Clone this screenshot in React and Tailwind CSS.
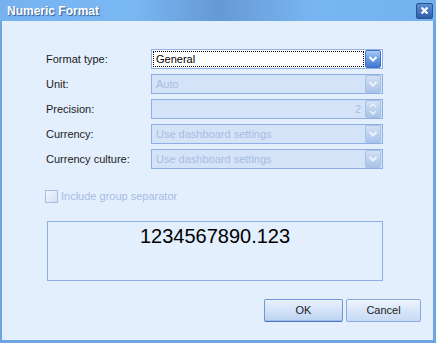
import React from 'react';

const font = { fontFamily: '"Liberation Sans", Arial, sans-serif' };

function DropBtn({ disabled }) {
  return (
    <div className={`w-[16px] h-[18px] shrink-0 rounded-[2px] border flex items-center justify-center ${disabled ? 'border-[#a9c0e4] bg-gradient-to-b from-[#d2e1f5] to-[#a9c3e9]' : 'border-[#3f72c4] bg-gradient-to-b from-[#a9cbf6] via-[#6a9de4] to-[#3f79d0]'}`}>
      <svg width="10" height="8" viewBox="0 0 10 8">
        <path d="M1.5 2 L5 5.5 L8.5 2" fill="none" stroke={disabled ? '#eef4fc' : '#ffffff'} strokeWidth="2" />
      </svg>
    </div>
  );
}

function SpinBtn() {
  return (
    <div className="w-[16px] h-[18px] shrink-0 rounded-[2px] border border-[#a9c0e4] bg-gradient-to-b from-[#d2e1f5] to-[#a9c3e9] flex flex-col items-center justify-center gap-[2px]">
      <svg width="8" height="5" viewBox="0 0 8 5">
        <path d="M1 4 L4 1 L7 4" fill="none" stroke="#eef4fc" strokeWidth="1.5" />
      </svg>
      <svg width="8" height="5" viewBox="0 0 8 5">
        <path d="M1 1 L4 4 L7 1" fill="none" stroke="#eef4fc" strokeWidth="1.5" />
      </svg>
    </div>
  );
}

function Field({ label, children }) {
  return (
    <div className="flex items-center h-[20px]">
      <span className="w-[105px] text-[11px] text-[#1b1b1b]">{label}</span>
      {children}
    </div>
  );
}

export default function App() {
  const disabledBox = 'w-[232px] h-[20px] border border-[#8fb0e6] bg-[#d4e3f7] flex items-center pl-[4px]';
  return (
    <div className="w-[436px] h-[343px] flex flex-col bg-[#e3effd] overflow-hidden" style={font}>
      <div className="h-[21px] shrink-0 flex items-center justify-between pl-[7px] pr-[3px] bg-[linear-gradient(to_right,#76b2f0_0%,#7ab8f4_30%,#6599d4_50%,#78b6f3_72%,#74b1ef_100%)]">
        <span className="text-white font-bold text-[12px] [text-shadow:1px_1px_1px_#2f5b94]">Numeric Format</span>
        <div className="w-[17px] h-[16px] rounded-[2px] border border-[#2c558f] bg-gradient-to-b from-[#5d8fd6] to-[#2e5ea8] flex items-center justify-center">
          <svg width="9" height="9" viewBox="0 0 9 9">
            <path d="M1.5 1.5 L7.5 7.5 M7.5 1.5 L1.5 7.5" stroke="#ffffff" strokeWidth="2.2" />
          </svg>
        </div>
      </div>

      <div className="flex-1 flex flex-col border-l-2 border-r-[3px] border-b-[3px] border-[#6ea4e2] pl-[44px] pr-[10px] pt-[28px]">
        <div className="flex flex-col gap-[5px]">
          <Field label="Format type:">
            <div className="w-[232px] h-[20px] border border-[#8fb0e6] bg-white flex items-center p-px">
              <div className="flex-1 h-[16px] border border-dotted border-black flex items-center pl-[2px] mr-[1px] text-[11px] text-black">General</div>
              <DropBtn />
            </div>
          </Field>
          <Field label="Unit:">
            <div className={disabledBox + ' pr-px'}>
              <span className="flex-1 text-[11px] text-[#a8bce4]">Auto</span>
              <DropBtn disabled />
            </div>
          </Field>
          <Field label="Precision:">
            <div className={disabledBox + ' pr-px'}>
              <span className="flex-1 text-right pr-[4px] text-[11px] text-[#a8bce4]">2</span>
              <SpinBtn />
            </div>
          </Field>
          <Field label="Currency:">
            <div className={disabledBox + ' pr-px'}>
              <span className="flex-1 text-[11px] text-[#a8bce4]">Use dashboard settings</span>
              <DropBtn disabled />
            </div>
          </Field>
          <Field label="Currency culture:">
            <div className={disabledBox + ' pr-px'}>
              <span className="flex-1 text-[11px] text-[#a8bce4]">Use dashboard settings</span>
              <DropBtn disabled />
            </div>
          </Field>
        </div>

        <div className="flex items-center mt-[21px] ml-[-1px] h-[13px]">
          <div className="w-[13px] h-[13px] border border-[#a7bde3] bg-gradient-to-br from-[#f2f7fe] to-[#cfdff5]" />
          <span className="ml-[3px] text-[11px] text-[#a8bce4]">Include group separator</span>
        </div>

        <div className="mt-[18px] ml-px w-[336px] h-[60px] border border-[#8fb0e6] flex justify-center pt-[2px]">
          <span className="text-[20px] leading-[24px] text-black">1234567890.123</span>
        </div>

        <div className="flex-1" />
        <div className="flex justify-end gap-[3px] mb-[18px] pr-[2px]">
          <button className="w-[79px] h-[23px] rounded-[2px] border border-[#6f97d6] border-b-[#4a78c4] bg-gradient-to-b from-[#e9f1fc] via-[#d3e3f8] to-[#bcd3f2] text-[11px] text-[#1b1b1b] shadow-[inset_0_-1px_0_#9ebbe8]">OK</button>
          <button className="w-[75px] h-[23px] rounded-[2px] border border-[#8aaadf] bg-gradient-to-b from-[#edf4fd] via-[#d9e6f9] to-[#c6daf4] text-[11px] text-[#1b1b1b]">Cancel</button>
        </div>
      </div>
    </div>
  );
}
